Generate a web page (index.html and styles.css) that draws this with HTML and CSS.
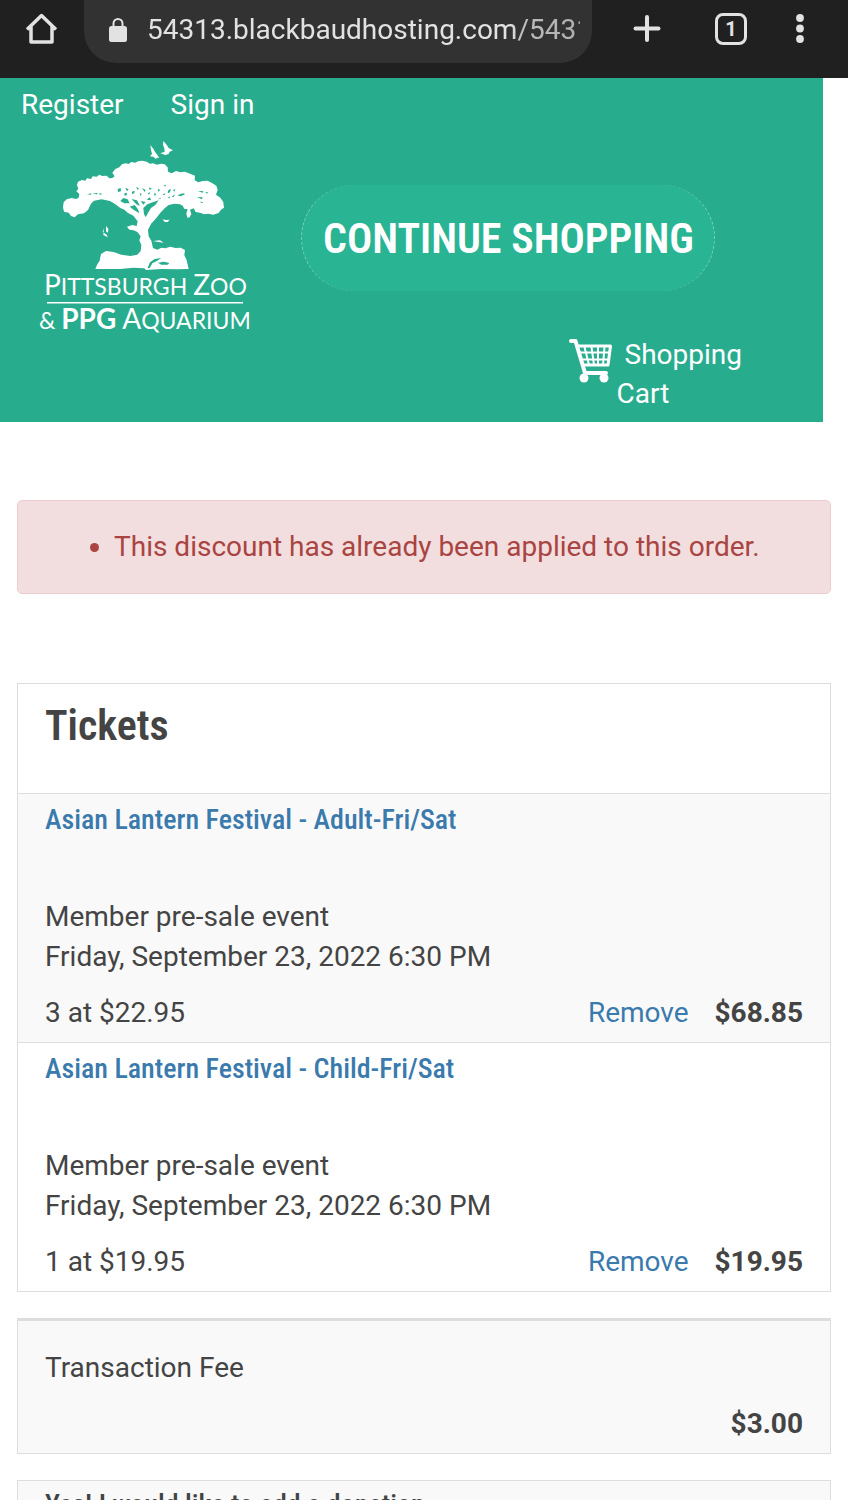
FILE: index.html
```html
<!DOCTYPE html>
<html lang="en">
<head>
    <meta charset="UTF-8">
    <meta name="viewport" content="width=device-width, initial-scale=1.0">
    <title>Shopping Cart - Pittsburgh Zoo &amp; PPG Aquarium</title>
    <link rel="stylesheet" href="styles.css">
</head>
<body>
    <div class="browser-bar">
        <button type="button" class="bar-btn" aria-label="Home">
            <svg width="34" height="34" viewBox="0 0 34 34" fill="none" stroke="#e2e2e2" stroke-width="3.5" stroke-linejoin="round"><path d="M7 14V30H28V14M3 17.500L17.500 3.500L32 17.500"/></svg>
        </button>
        <div class="address">
            <svg width="18" height="24" viewBox="0 0 18 24"><rect y="8" width="18" height="16" rx="2.500" fill="#e2e2e2"/><path d="M4.500 9V5.500a4.500 4.500 0 0 1 9 0V9" fill="none" stroke="#e2e2e2" stroke-width="2"/></svg>
            <input type="text" aria-label="Address" value="54313.blackbaudhosting.com/54313">
        </div>
        <button type="button" class="bar-btn" aria-label="New tab">
            <svg width="28" height="34" viewBox="0 0 28 34" stroke="#e2e2e2" stroke-width="4" stroke-linecap="round"><path d="M14 5V28M2.500 16.500H25.500"/></svg>
        </button>
        <button type="button" class="bar-btn tab-count" aria-label="1 open tab">1</button>
        <button type="button" class="bar-btn" aria-label="Menu">
            <svg width="8" height="34" viewBox="0 0 8 34" fill="#e2e2e2"><circle cx="4" cy="6" r="3.900"/><circle cx="4" cy="16.500" r="3.900"/><circle cx="4" cy="27" r="3.900"/></svg>
        </button>
    </div>

    <header>
        <nav>
            <a href="#">Register</a>
            <a href="#">Sign in</a>
        </nav>
        <div class="brand">
            <a href="#" class="logo" aria-label="Pittsburgh Zoo &amp; PPG Aquarium">
                <svg width="216" height="203" viewBox="38 132 216 203" fill="#fff">
                    <g transform="translate(20 130) scale(0.3333)">
                        <!-- birds -->
                        <path d="M391 45L400 56L404 64L410 72L418 83L411 83L408 87L400 80L390 79L396 72L393 60Z"/>
                        <path d="M430 33L440 44L446 54L459 61L449 65L446 72L436 75L421 70L434 65L433 55L429 44Z"/>
                        <!-- crown, trunk and roots -->
                        <path d="M129 232L131 217L140 208L155 204L168 207L176 203L178 192L169 184L175 176L171 165L174 155L186 150L196 152L201 145L213 147L218 139L230 140L238 134L247 138L260 137L268 145L277 144L284 139L277 128L286 117L298 112L306 103L317 100L326 102L334 96L346 98L354 94L367 92L380 95L390 101L400 100L410 104L423 101L434 103L443 112L444 125L455 130L468 123L481 127L495 125L512 132L525 137L524 151L535 157L548 153L562 152L575 158L589 167L593 180L588 194L601 203L610 216L612 233L603 239L596 249L580 254L565 251L553 253L540 248L527 246L521 235L510 239L514 252L509 262L502 263L499 251L503 238L492 236L489 228L480 223L463 221L446 225L434 235L420 250L409 264L393 282L384 300L386 319L394 332L399 354L412 359L424 353L436 355L451 350L466 354L482 353L495 360L493 376L500 390L506 417L470 418L425 417L378 420L373 415L340 413L300 417L226 417L232 403L239 392L243 372L258 363L281 366L304 374L331 378L352 374L362 363L364 345L358 331L362 319L352 306L341 301L328 299L321 290L337 285L350 288L353 274L340 257L324 249L313 239L301 234L285 222L270 213L245 208L222 212L213 221L204 240L192 250L174 253L164 262L153 258L146 248L132 245Z"/>
                        <!-- small leaves and branches -->
                        <path d="M258 288L265 296L264 308L258 304ZM252 294L248 306L261 315L263 322L250 315ZM428 268L438 270L449 269L443 276L434 276ZM399 333L420 331L431 338L415 336Z"/>
                        <!-- openings in the crown -->
                        <g fill="#27ac8e">
                            <path d="M372 252L370 234L382 223L398 217L416 211L406 225L393 234L384 249L377 262Z"/>
                            <path d="M329 230L344 225L354 238L358 250L342 240ZM301 213L310 204L323 208L329 220L313 220ZM335 207L351 211L360 228L349 223ZM362 213L377 216L370 224ZM380 209L390 202L393 211Z"/>
                            <path d="M293 177L302 174L303 184L294 186ZM313 190L320 188L321 195L314 197ZM316 173L326 178L321 184ZM336 185L344 182L343 190L336 192ZM348 171L356 174L354 181ZM359 189L365 192L362 199ZM366 174L377 180L374 186ZM383 190L391 187L387 194ZM387 172L396 176L389 180ZM403 188L409 193L403 198ZM414 177L421 180L414 185ZM430 165L437 165L438 170ZM427 195L436 189L434 195ZM445 181L453 177L450 187L443 190ZM459 180L466 177L463 185ZM442 204L451 199L448 205ZM413 208L423 203L421 207ZM455 200L465 193L461 201Z"/>
                            <path d="M201 193L214 190L213 194ZM218 191L233 188L231 193ZM237 190L247 191L240 195ZM472 196L489 190L496 192L482 199ZM534 184L550 183L548 188ZM555 187L564 187L562 191ZM531 201L548 202L546 208ZM539 215L549 216L547 220Z"/>
                            <path d="M383 414L390 397L404 387L424 384L412 392L397 400L389 415ZM414 398L432 395L448 399L443 404L424 404Z"/>
                        </g>
                    </g>
                    <g class="logo-text">
                        <text x="44" y="295"><tspan class="cap">P</tspan>ITTSBURGH <tspan class="cap">Z</tspan>OO</text>
                        <text x="39" y="329">&amp; <tspan class="cap strong">PPG</tspan> <tspan class="cap">A</tspan>QUARIUM</text>
                    </g>
                    <rect x="47" y="302" width="196" height="1.500"/>
                </svg>
            </a>
            <a href="#" class="continue">CONTINUE SHOPPING</a>
        </div>
        <a href="#" class="cart-link">
            <svg width="44" height="44" viewBox="0 0 44 44" fill="none" stroke="#fff" stroke-linecap="round" stroke-linejoin="round">
                <path d="M2 2H6.500L16 34H37" stroke-width="4"/>
                <path d="M9 7H41.500L39 26H14" stroke-width="3"/>
                <path d="M10 13.500H41M12 20.500H40M15.500 8L20 26M22.500 8L25 26M29 8V26M35.500 8L34 26" stroke-width="2"/>
                <circle cx="15" cy="39" r="4.500" fill="#fff" stroke="none"/><circle cx="35" cy="39" r="4.500" fill="#fff" stroke="none"/>
            </svg>
            <span>Shopping Cart</span>
        </a>
    </header>

    <main>
        <div class="alert" role="alert">
            <ul>
                <li>This discount has already been applied to this order.</li>
            </ul>
        </div>

        <section class="panel tickets">
            <h2>Tickets</h2>
            <article class="item">
                <h3><a href="#">Asian Lantern Festival - Adult-Fri/Sat</a></h3>
                <p>Member pre-sale event</p>
                <p>Friday, September 23, 2022 6:30 PM</p>
                <div class="line">
                    <span>3 at $22.95</span>
                    <a href="#">Remove</a>
                    <strong>$68.85</strong>
                </div>
            </article>
            <article class="item">
                <h3><a href="#">Asian Lantern Festival - Child-Fri/Sat</a></h3>
                <p>Member pre-sale event</p>
                <p>Friday, September 23, 2022 6:30 PM</p>
                <div class="line">
                    <span>1 at $19.95</span>
                    <a href="#">Remove</a>
                    <strong>$19.95</strong>
                </div>
            </article>
        </section>

        <section class="panel fee">
            <p>Transaction Fee</p>
            <div class="line">
                <strong>$3.00</strong>
            </div>
        </section>

        <section class="panel donation">
            <h3>Yes! I would like to add a donation</h3>
        </section>
    </main>
</body>
</html>
```
FILE: styles.css
```css
* {
    box-sizing: border-box;
}
body {
    margin: 0;
    font-family: Roboto, Arial, sans-serif;
    font-size: 28px;
    line-height: 40px;
    color: #444;
    background-color: #fff;
}
h2, h3, p, ul {
    margin: 0;
}
h2, h3 {
    font-family: "Roboto Condensed", "Liberation Sans Narrow", sans-serif;
}
h2 {
    font-size: 42px;
    font-weight: 600;
}
h3 {
    font-size: 28px;
    font-weight: 500;
}
a {
    color: #3a7aad;
    text-decoration: none;
}

/* browser toolbar */
.browser-bar {
    display: flex;
    align-items: flex-start;
    height: 78px;
    padding: 0 44px 0 24px;
    background-color: #202020;
}
.bar-btn {
    display: flex;
    margin: 12px 0 0;
    padding: 0;
    border: 0;
    background: none;
}
.address {
    display: flex;
    flex: 1;
    align-items: center;
    gap: 20px;
    height: 63px;
    margin: 0 41px 0 26px;
    padding: 0 12px 4px 25px;
    border-radius: 0 0 32px 32px;
    background-color: #323232;
}
.address input {
    flex: 1;
    min-width: 0;
    padding: 0;
    border: 0;
    font: inherit;
    color: #e2e2e2;
    background: none;
    mask-image: linear-gradient(to right, #000 84%, rgba(0, 0, 0, 0.8) 86%, rgba(0, 0, 0, 0.7));
}
.tab-count {
    align-items: center;
    justify-content: center;
    width: 32px;
    height: 32px;
    margin: 13px 49px 0 54px;
    border: 3px solid #e2e2e2;
    border-radius: 8px;
    font-family: Roboto, Arial, sans-serif;
    font-size: 20px;
    font-weight: bold;
    line-height: 24px;
    color: #e2e2e2;
}

/* site header */
header {
    width: 97%;
    padding-bottom: 9px;
    background-color: #27ac8e;
}
header a {
    color: #fff;
}
nav {
    display: flex;
    gap: 47px;
    padding: 7px 21px;
}
.brand {
    display: flex;
    align-items: flex-start;
    gap: 47px;
    padding-left: 38px;
}
.logo svg {
    display: block;
}
.logo-text {
    font-family: Lato, sans-serif;
    font-size: 23px;
}
.logo-text .cap {
    font-size: 28px;
}
.logo-text .strong {
    font-weight: bold;
}
.continue {
    margin-top: 53px;
    padding: 33px 20px 31px 21px;
    border: 1px dashed rgba(255, 255, 255, 0.4);
    border-width: 0 1px;
    border-radius: 53px;
    font-family: "Roboto Condensed", "Liberation Sans Narrow", sans-serif;
    font-size: 42px;
    font-weight: 600;
    line-height: 42px;
    background-color: #29b494;
}
.cart-link {
    display: flex;
    justify-content: flex-end;
    gap: 4px;
    margin-right: 76px;
    line-height: 39px;
}
.cart-link svg {
    margin-top: 4px;
}
.cart-link span {
    width: 130px;
    text-indent: 8px;
}

/* cart */
.alert {
    margin: 78px 17px 89px;
    padding: 26px;
    border: 1px solid #ebccd1;
    border-radius: 5px;
    color: #a94442;
    background-color: #f2dede;
}
.alert ul {
    padding-left: 70px;
}
.panel {
    margin: 0 17px 26px;
    border: 1px solid #ddd;
    background-color: #f9f9f9;
}
.tickets {
    background-color: #fff;
}
.tickets h2 {
    padding: 22px 27px 47px;
}
.item {
    padding: 6px 27px 9px;
    border-top: 1px solid #ddd;
}
.item:nth-of-type(odd) {
    background-color: #f9f9f9;
}
.item h3 {
    margin-bottom: 57px;
}
.line {
    display: flex;
    justify-content: flex-end;
    gap: 26px;
    margin-top: 16px;
}
.line span {
    margin-right: auto;
}
.fee {
    padding: 27px 27px 9px;
    border-top-width: 3px;
}
.donation {
    padding: 4px 27px 9px;
}
```
